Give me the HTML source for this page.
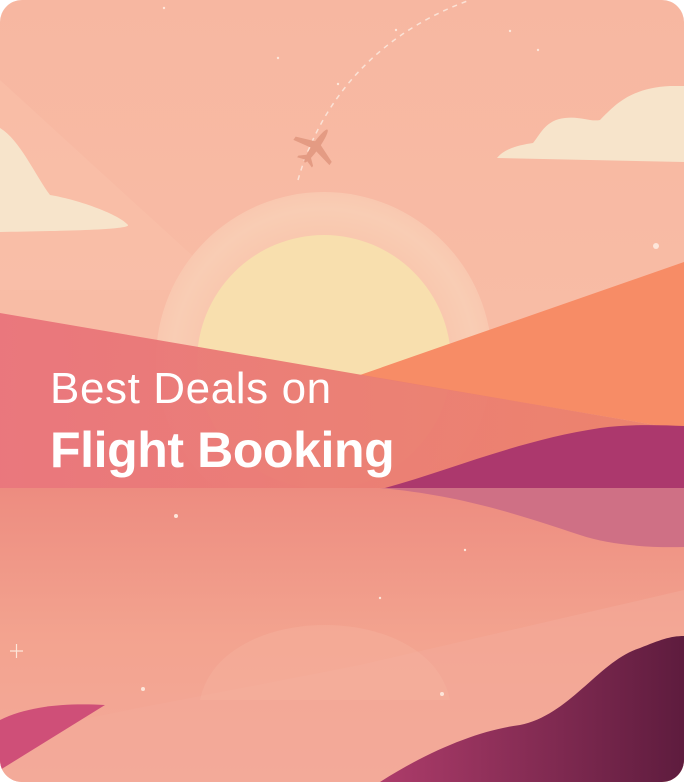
<!DOCTYPE html>
<html><head><meta charset="utf-8"><style>
html,body{margin:0;padding:0;background:#fff;width:684px;height:782px;overflow:hidden}
.card{position:absolute;left:0;top:0;width:684px;height:782px;border-radius:22px;overflow:hidden}
.t{position:absolute;left:50px;color:#fff;font-family:"Liberation Sans",sans-serif;white-space:nowrap;line-height:normal}
</style></head><body>
<div class="card">
<svg width="684" height="782" viewBox="0 0 684 782" xmlns="http://www.w3.org/2000/svg">
<defs>
<linearGradient id="sky" x1="0" y1="0" x2="0" y2="1"><stop offset="0" stop-color="#f7b7a1"/><stop offset="1" stop-color="#fac3ab"/></linearGradient>
<linearGradient id="water" x1="0" y1="0" x2="0" y2="1"><stop offset="0" stop-color="#ed8c80"/><stop offset="0.5" stop-color="#f3a38f"/><stop offset="1" stop-color="#f3aa9a"/></linearGradient>
<linearGradient id="lm" x1="0" y1="0" x2="1" y2="0"><stop offset="0" stop-color="#e9727a"/><stop offset="1" stop-color="#eb8068"/></linearGradient>
<linearGradient id="dh" x1="0" y1="0" x2="1" y2="0"><stop offset="0" stop-color="#ad3c6a"/><stop offset="1" stop-color="#5e1c3e"/></linearGradient>
<radialGradient id="halo" cx="0.5" cy="0.5" r="0.5"><stop offset="0.7" stop-color="#f9c6ad"/><stop offset="0.9" stop-color="#f9cdb4"/><stop offset="1" stop-color="#f9c8b0"/></radialGradient>
</defs>
<rect width="684" height="782" fill="url(#sky)"/>
<polygon points="0,80 230,290 0,290" fill="#fbc6ae" opacity="0.35"/>
<circle cx="324" cy="360" r="168" fill="url(#halo)"/>
<circle cx="324" cy="362" r="127" fill="#f8dfae"/>
<path d="M0,128 C20,140 35,175 50,195 C80,200 120,215 128,225 C130,230 60,231 0,232Z" fill="#f7e4cb"/>
<path d="M497,158 C505,148 520,145 533,143 C540,135 545,120 565,118 C580,116 590,122 600,120 C615,105 630,88 670,86 L684,86 L684,162Z" fill="#f7e4cb"/>
<polygon points="360,375 684,262 684,430 655,425" fill="#f78c66"/>
<polygon points="0,313 655,425 684,428 684,488 0,488" fill="url(#lm)" opacity="0.93"/>
<path d="M385,488 C450,470 520,440 600,428 C630,424 660,425 684,426 L684,488Z" fill="#ac386d"/>
<rect x="0" y="488" width="684" height="294" fill="url(#water)"/>
<path d="M380,488 L684,488 L684,547 C650,548 610,545 580,535 C520,515 460,495 380,488Z" fill="#cf7085"/>
<polygon points="0,735 360,665 684,590 684,782 0,782" fill="#f3aa9a" opacity="0.6"/>
<path d="M200,700 C220,600 430,600 450,700 Z" fill="#f4b5a0" opacity="0.4"/>
<path d="M0,720 C30,705 70,703 105,705 L0,770Z" fill="#cf4f78"/>
<path d="M380,782 C430,750 480,730 520,725 C570,715 600,660 640,648 C660,640 670,636 684,636 L684,782Z" fill="url(#dh)"/>
<path d="M298,180 C315,120 360,40 470,0" fill="none" stroke="#fbe2d6" stroke-width="1.5" stroke-dasharray="5,5"/>
<g transform="translate(316,146) rotate(35)" fill="#e49b83">
<ellipse cx="0" cy="0" rx="3.5" ry="20"/>
<polygon points="-2,-4 -22,4 -22,8 -2,4 2,4 22,8 22,4 2,-4"/>
<polygon points="-2,12 -9,18 -9,20 0,17 9,20 9,18 2,12"/>
</g>
<g fill="#fde6da">
<circle cx="656" cy="246" r="3"/><circle cx="176" cy="516" r="2"/><circle cx="143" cy="689" r="2"/><circle cx="442" cy="694" r="2"/>
<circle cx="164" cy="8" r="1.2"/><circle cx="278" cy="58" r="1.2"/><circle cx="510" cy="31" r="1.2"/><circle cx="538" cy="50" r="1.2"/><circle cx="338" cy="84" r="1.2"/><circle cx="396" cy="30" r="1.2"/><circle cx="465" cy="550" r="1.2"/><circle cx="380" cy="598" r="1.2"/>
</g>
<path d="M10,651 h13 M16.5,644 v14" stroke="#fde6da" stroke-width="1.2"/>
</svg>
<div class="t" style="top:364px;font-size:44px;font-weight:300;letter-spacing:0.6px">Best Deals on</div>
<div class="t" style="top:421px;font-size:50px;font-weight:bold;letter-spacing:-0.4px">Flight Booking</div>
</div>
</body></html>
